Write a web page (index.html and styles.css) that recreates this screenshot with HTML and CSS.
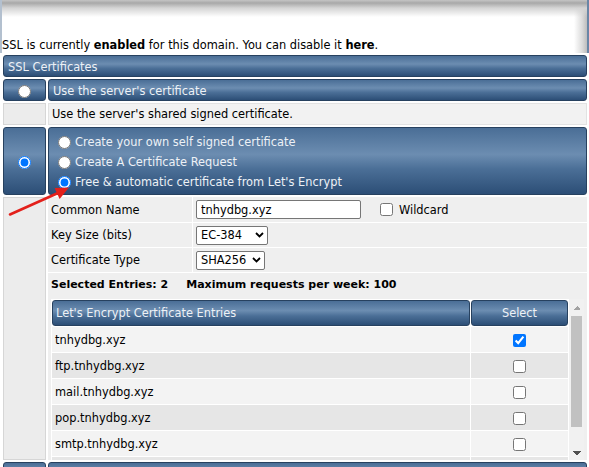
FILE: index.html
```html
<!DOCTYPE html>
<html>
<head>
<meta charset="utf-8">
<title>SSL Certificates</title>
<link rel="stylesheet" href="styles.css">
</head>
<body>
<div class="frame">
  <p class="status">SSL is currently <b>enabled</b> for this domain. You can disable it <b>here</b>.</p>
</div>
<table class="main">
  <tr><td colspan="2" class="bar">SSL Certificates</td></tr>
  <tr>
    <td class="bar sel"><input class="rad" type="radio" name="type"></td>
    <td class="bar">Use the server's certificate</td>
  </tr>
  <tr>
    <td class="plain side"></td>
    <td class="plain">Use the server's shared signed certificate.</td>
  </tr>
  <tr>
    <td class="bar sel tall"><input class="rad" type="radio" name="type" checked></td>
    <td class="bar opts">
      <label class="opt"><input class="rad" type="radio" name="mode">Create your own self signed certificate</label>
      <label class="opt"><input class="rad" type="radio" name="mode">Create A Certificate Request</label>
      <label class="opt"><input class="rad" type="radio" name="mode" checked>Free &amp; automatic certificate from Let's Encrypt</label>
    </td>
  </tr>
  <tr>
    <td class="plain side"></td>
    <td class="inner">
      <div class="frow r1">
        <div class="lab">Common Name</div>
        <div class="val"><input class="txt" type="text" value="tnhydbg.xyz"><label class="wild"><input class="chk" type="checkbox">Wildcard</label></div>
      </div>
      <div class="frow">
        <div class="lab">Key Size (bits)</div>
        <div class="val">
          <span class="selbox">
            <select class="sel-in w72"><option>EC-384</option></select>
            <svg class="chev" viewBox="0 0 9 6" width="9" height="6" aria-hidden="true"><path d="M1 1 L4.5 4.5 L8 1" fill="none" stroke="#000" stroke-width="1.8"/></svg>
          </span>
        </div>
      </div>
      <div class="frow">
        <div class="lab">Certificate Type</div>
        <div class="val">
          <span class="selbox">
            <select class="sel-in w69"><option>SHA256</option></select>
            <svg class="chev" viewBox="0 0 9 6" width="9" height="6" aria-hidden="true"><path d="M1 1 L4.5 4.5 L8 1" fill="none" stroke="#000" stroke-width="1.8"/></svg>
          </span>
        </div>
      </div>
      <div class="summary"><b>Selected Entries: 2</b><b class="max">Maximum requests per week: 100</b></div>
      <div class="entries">
        <div class="scroll">
          <table class="list">
            <thead>
              <tr><th class="hname">Let's Encrypt Certificate Entries</th><th class="hsel">Select</th></tr>
            </thead>
            <tbody>
              <tr><td>tnhydbg.xyz</td><td class="c"><input class="chk" type="checkbox" checked></td></tr>
              <tr><td>ftp.tnhydbg.xyz</td><td class="c"><input class="chk" type="checkbox"></td></tr>
              <tr><td>mail.tnhydbg.xyz</td><td class="c"><input class="chk" type="checkbox"></td></tr>
              <tr><td>pop.tnhydbg.xyz</td><td class="c"><input class="chk" type="checkbox"></td></tr>
              <tr><td>smtp.tnhydbg.xyz</td><td class="c"><input class="chk" type="checkbox"></td></tr>
              <tr><td></td><td class="c"></td></tr>
            </tbody>
          </table>
        </div>
        <div class="vbar" aria-hidden="true">
          <div class="btn up"></div>
          <div class="thumb"></div>
          <div class="track"></div>
          <div class="btn down"></div>
        </div>
      </div>
    </td>
  </tr>
  <tr>
    <td class="bar sel"></td>
    <td class="bar"></td>
  </tr>
</table>
<svg class="arrow" viewBox="0 180 80 45" width="80" height="45" aria-hidden="true">
  <line x1="10" y1="214.5" x2="58" y2="193" stroke="#e3201b" stroke-width="2.6" stroke-linecap="round"/>
  <polygon points="69,187.5 59.6,199 54.6,188" fill="#e3201b"/>
</svg>
</body>
</html>
```
FILE: styles.css
```css
* { box-sizing: border-box; }
html { overflow: hidden; }
body {
  margin: 0;
  font: 11.4px "DejaVu Sans", Verdana, sans-serif;
  color: #000;
  background: #fff;
  position: relative;
}
.frame {
  height: 53px;
  border-left: 2px solid #b3c0cf;
  border-right: 2px solid #6a86a6;
  background:
    linear-gradient(to bottom, #c4c4c4 0, #a8a8a8 3px, #d4d4d4 8px, rgba(255,255,255,0) 17px),
    linear-gradient(to left, #bdbdbd 0, #dcdcdc 5px, rgba(255,255,255,0) 13px),
    #fff;
  display: flex;
  align-items: flex-end;
  padding: 0 0 1px 0;
}
.status { margin: 0; line-height: 14px; }

.main {
  border-collapse: separate;
  border-spacing: 2px;
  width: 588px;
  margin-left: 1px;
}
.main > tbody > tr > td { padding: 0; }
.bar {
  height: 22px;
  background: linear-gradient(to bottom, #4a6e96 0%, #6c8db1 40%, #4b6f97 62%, #2c4e76 100%);
  border: 1px solid #27415f;
  border-radius: 3px;
  color: #edf1f6;
  padding: 1px 4px 0 4px !important;
  vertical-align: middle;
}
.sel { width: 43px; text-align: center; }
.tall { height: 68px; }
.rad { margin: 0; width: 13px; height: 13px; vertical-align: middle; }
.plain {
  height: 22px;
  background: #f2f2f2;
  padding: 0 3px !important;
  border: 1px solid #e2e2e2;
}
.side { background: #ececec; border-color: #d6d6d6; }
.bar.opts { padding: 4px 0 0 9px !important; vertical-align: top; }
.opt {
  display: flex;
  align-items: center;
  gap: 4px;
  height: 20px;
}

.inner { padding: 0 !important; background: #fff; vertical-align: top; }
.frow {
  display: grid;
  grid-template-columns: 144px 1fr;
  column-gap: 1px;
  height: 24px;
  margin-bottom: 1px;
}
.frow.r1 { height: 25px; }
.lab, .val {
  background: #efefef;
  display: flex;
  align-items: center;
  padding-left: 3px;
}
.txt {
  width: 165px;
  height: 19px;
  border: 1px solid #767676;
  border-radius: 2px;
  padding: 0 4px;
  font: 11.4px "DejaVu Sans", Verdana, sans-serif;
  color: #000;
}
.wild { display: flex; align-items: center; gap: 6px; margin-left: 19px; }
.chk { margin: 0; width: 13px; height: 13px; }
.selbox { position: relative; display: inline-flex; }
.sel-in {
  -webkit-appearance: none;
  appearance: none;
  height: 19px;
  font: 11.4px "DejaVu Sans", Verdana, sans-serif;
  color: #000;
  border: 1px solid #767676;
  border-radius: 2px;
  background: #fff;
  padding: 0 14px 0 4px;
}
.chev { position: absolute; right: 4px; top: 6px; pointer-events: none; }
.w72 { width: 72px; }
.w69 { width: 69px; }
.summary {
  background: #efefef;
  height: 22px;
  display: flex;
  align-items: center;
  padding-left: 3px;
}
.summary b { font-size: 11px; }
.max { margin-left: 18px; }
.entries {
  background: #efefef;
  padding: 4px 3px 0 3px;
  display: flex;
}
.scroll {
  flex: 1;
  height: 161px;
  overflow: hidden;
  background: #fff;
}
.vbar {
  width: 15px;
  height: 161px;
  background: #f1f1f1;
  display: flex;
  flex-direction: column;
}
.btn { height: 17px; }
.btn.down { height: 15px; }
.up {
  background: conic-gradient(from 135deg at 50% 0, #a3a3a3 90deg, transparent 0) center / 8px 4px no-repeat;
}
.down {
  background: conic-gradient(from -45deg at 50% 100%, #505050 90deg, transparent 0) center / 8px 4px no-repeat;
}
.thumb { height: 111px; margin: 0 2px; background: #c1c1c1; }
.track { flex: 1; }
.list {
  width: 100%;
  border-collapse: separate;
  border-spacing: 1px;
}
.list th {
  height: 26px;
  font-weight: normal;
  background: linear-gradient(to bottom, #4a6e96 0%, #6c8db1 40%, #4b6f97 62%, #2c4e76 100%);
  border: 1px solid #27415f;
  border-radius: 3px;
  color: #edf1f6;
  padding: 0 3px;
}
.hname { text-align: left; }
.hsel { width: 97px; text-align: center; }
.list td { height: 25px; padding: 0 3px; background: #f3f3f3; }
.list tbody tr:nth-child(even) td { background: #e6e6e6; }
.list td.c { text-align: center; }
.list td.c .chk { vertical-align: middle; }

.arrow { position: absolute; left: 0; top: 180px; }
```
